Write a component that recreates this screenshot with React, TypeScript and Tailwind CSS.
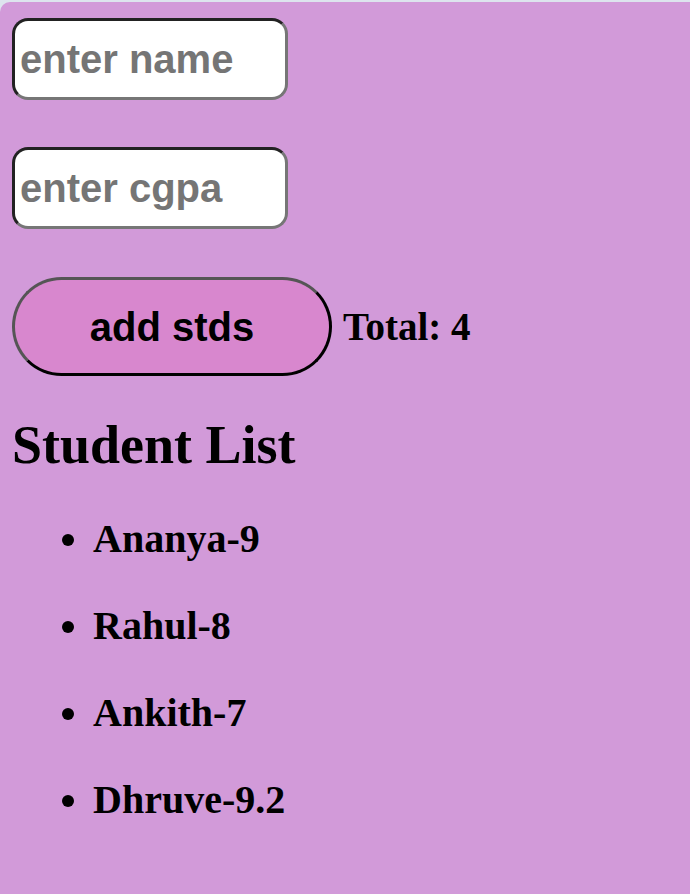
import React, { useState } from 'react';

interface Student {
  name: string;
  cgpa: string;
}

const INITIAL: Student[] = [
  { name: 'Ananya', cgpa: '9' },
  { name: 'Rahul', cgpa: '8' },
  { name: 'Ankith', cgpa: '7' },
  { name: 'Dhruve', cgpa: '9.2' },
];

const App: React.FC = () => {
  const [name, setName] = useState('');
  const [cgpa, setCgpa] = useState('');
  const [students, setStudents] = useState<Student[]>(INITIAL);

  const addStudent = () => {
    if (!name || !cgpa) return;
    setStudents(prev => [...prev, { name, cgpa }]);
    setName('');
    setCgpa('');
  };

  const inputCls =
    "block w-[276px] h-[82px] bg-white rounded-[16px] border-[3px] border-solid border-t-[#222222] border-l-[#222222] border-b-[#767676] border-r-[#767676] pl-[5px] text-[40px] font-bold text-black placeholder:text-[#757575] outline-none font-['Liberation_Sans',Arial,sans-serif]";

  return (
    <div className="min-h-screen bg-[#dde4ee] pt-[2px]">
      <div className="min-h-[892px] bg-[#d29ad9] rounded-tl-[10px] pl-[12px] pt-[16px] pb-6 font-['Liberation_Serif','Times_New_Roman',serif] text-black">
        <input
          type="text"
          placeholder="enter name"
          className={inputCls}
          value={name}
          onChange={(e) => setName(e.target.value)}
        />
        <input
          type="text"
          placeholder="enter cgpa"
          className={`${inputCls} mt-[47px]`}
          value={cgpa}
          onChange={(e) => setCgpa(e.target.value)}
        />

        <div className="flex items-center mt-[48px]">
          <button
            onClick={addStudent}
            className="w-[320px] h-[99px] rounded-full bg-[#d887ce] border-[3px] border-solid border-t-[#555555] border-l-[#555555] border-b-black border-r-black text-[40px] font-bold text-black font-['Liberation_Sans',Arial,sans-serif]"
          >
            add stds
          </button>
          <span className="ml-[11px] text-[39px] font-bold leading-[46px]">Total: {students.length}</span>
        </div>

        <h1 className="mt-[38px] text-[54px] font-bold leading-[62px]">Student List</h1>

        <ul className="list-disc pl-[81px] mt-[40px]">
          {students.map((s, i) => (
            <li key={i} className="text-[40px] font-bold leading-[46px] mb-[41px]">
              {s.name}-{s.cgpa}
            </li>
          ))}
        </ul>
      </div>
    </div>
  );
};

export default App;
